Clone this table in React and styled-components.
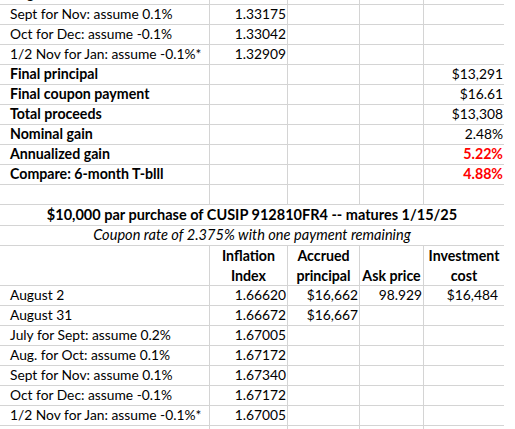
import React from "react";
import styled, { createGlobalStyle } from "styled-components";

const GlobalStyle = createGlobalStyle`
  html, body {
    margin: 0;
    padding: 0;
    background: #ffffff;
    overflow: hidden;
  }
  body {
    font-family: Lato, "Noto Sans", sans-serif;
    font-size: 13.8px;
    color: #000000;
  }
`;

const GRID = "#d4d4d4";
const COLS = "210px 78px 72px 64px 80px";

const topRows = [
  ["Aug. for Oct: assume 0.1%", "1.33308"],
  ["Sept for Nov: assume 0.1%", "1.33175"],
  ["Oct for Dec: assume -0.1%", "1.33042"],
  ["1/2 Nov for Jan: assume -0.1%*", "1.32909"],
];

const summaryRows = [
  { label: "Final principal", value: "$13,291" },
  { label: "Final coupon payment", value: "$16.61" },
  { label: "Total proceeds", value: "$13,308" },
  { label: "Nominal gain", value: "2.48%" },
  { label: "Annualized gain", value: "5.22%", red: true },
  { label: "Compare: 6-month T-blll", value: "4.88%", red: true },
];

const bottomRows = [
  ["August 2", "1.66620", "$16,662", "98.929", "$16,484"],
  ["August 31", "1.66672", "$16,667", "", ""],
  ["July for Sept: assume 0.2%", "1.67005", "", "", ""],
  ["Aug. for Oct: assume 0.1%", "1.67172", "", "", ""],
  ["Sept for Nov: assume 0.1%", "1.67340", "", "", ""],
  ["Oct for Dec: assume -0.1%", "1.67172", "", "", ""],
  ["1/2 Nov for Jan: assume -0.1%*", "1.67005", "", "", ""],
  ["", "", "", "", ""],
];

function App() {
  return (
    <>
      <GlobalStyle />
      <Sheet>
        {topRows.map((r, i) => (
          <Row key={"t" + i}>
            <Cell>{r[0]}</Cell>
            <Cell $right>{r[1]}</Cell>
            <Cell />
            <Cell />
            <Cell />
          </Row>
        ))}

        {summaryRows.map((r, i) => (
          <Row key={"s" + i}>
            <Cell $bold>{r.label}</Cell>
            <Cell />
            <Cell />
            <Cell />
            <Cell $right $bold={r.red} $red={r.red}>{r.value}</Cell>
          </Row>
        ))}

        <Row>
          <Cell />
          <Cell />
          <Cell />
          <Cell />
          <Cell />
        </Row>

        <Row $h={21}>
          <Banner $bold>$10,000 par purchase of CUSIP 912810FR4 -- matures 1/15/25</Banner>
        </Row>
        <Row>
          <Banner $italic>Coupon rate of 2.375% with one payment remaining</Banner>
        </Row>

        <Row $h={40}>
          <HeadCell />
          <HeadCell>Inflation<br />Index</HeadCell>
          <HeadCell>Accrued<br />principal</HeadCell>
          <HeadCell>Ask price</HeadCell>
          <HeadCell>Investment<br />cost</HeadCell>
        </Row>

        {bottomRows.map((r, i) => (
          <Row key={"b" + i}>
            <Cell>{r[0]}</Cell>
            <Cell $right>{r[1]}</Cell>
            <Cell $right>{r[2]}</Cell>
            <Cell $right>{r[3]}</Cell>
            <Cell $right $pr={6}>{r[4]}</Cell>
          </Row>
        ))}
      </Sheet>
    </>
  );
}

const Sheet = styled.div`
  width: 504px;
  margin-top: -15px;
  display: flex;
  flex-direction: column;
`;

const Row = styled.div`
  display: grid;
  grid-template-columns: ${COLS};
  height: ${(p) => p.$h || 20}px;
  box-sizing: border-box;
  border-bottom: 1px solid ${GRID};
`;

const Cell = styled.div`
  display: flex;
  align-items: flex-end;
  justify-content: ${(p) => (p.$right ? "flex-end" : "flex-start")};
  box-sizing: border-box;
  border-right: 1px solid ${GRID};
  padding: 0 ${(p) => (p.$pr != null ? p.$pr : 1)}px 1px 10px;
  line-height: 18px;
  white-space: nowrap;
  font-size: ${(p) => (p.$bold ? "14.2px" : "13.8px")};
  font-weight: ${(p) => (p.$bold ? 700 : 400)};
  color: ${(p) => (p.$red ? "#ff0000" : "#000000")};

  &:last-child {
    border-right: none;
  }
`;

const Banner = styled.div`
  grid-column: 1 / -1;
  display: flex;
  align-items: flex-end;
  justify-content: center;
  padding-bottom: 1px;
  line-height: 18px;
  white-space: nowrap;
  font-weight: ${(p) => (p.$bold ? 700 : 400)};
  font-style: ${(p) => (p.$italic ? "italic" : "normal")};
  font-size: ${(p) => (p.$bold ? "14.5px" : "14.6px")};
`;

const HeadCell = styled.div`
  display: flex;
  align-items: flex-end;
  justify-content: center;
  text-align: center;
  box-sizing: border-box;
  border-right: 1px solid ${GRID};
  padding-bottom: 1px;
  line-height: 20px;
  font-size: 14.2px;
  font-weight: 700;
  white-space: nowrap;

  &:last-child {
    border-right: none;
  }
`;

export default App;
